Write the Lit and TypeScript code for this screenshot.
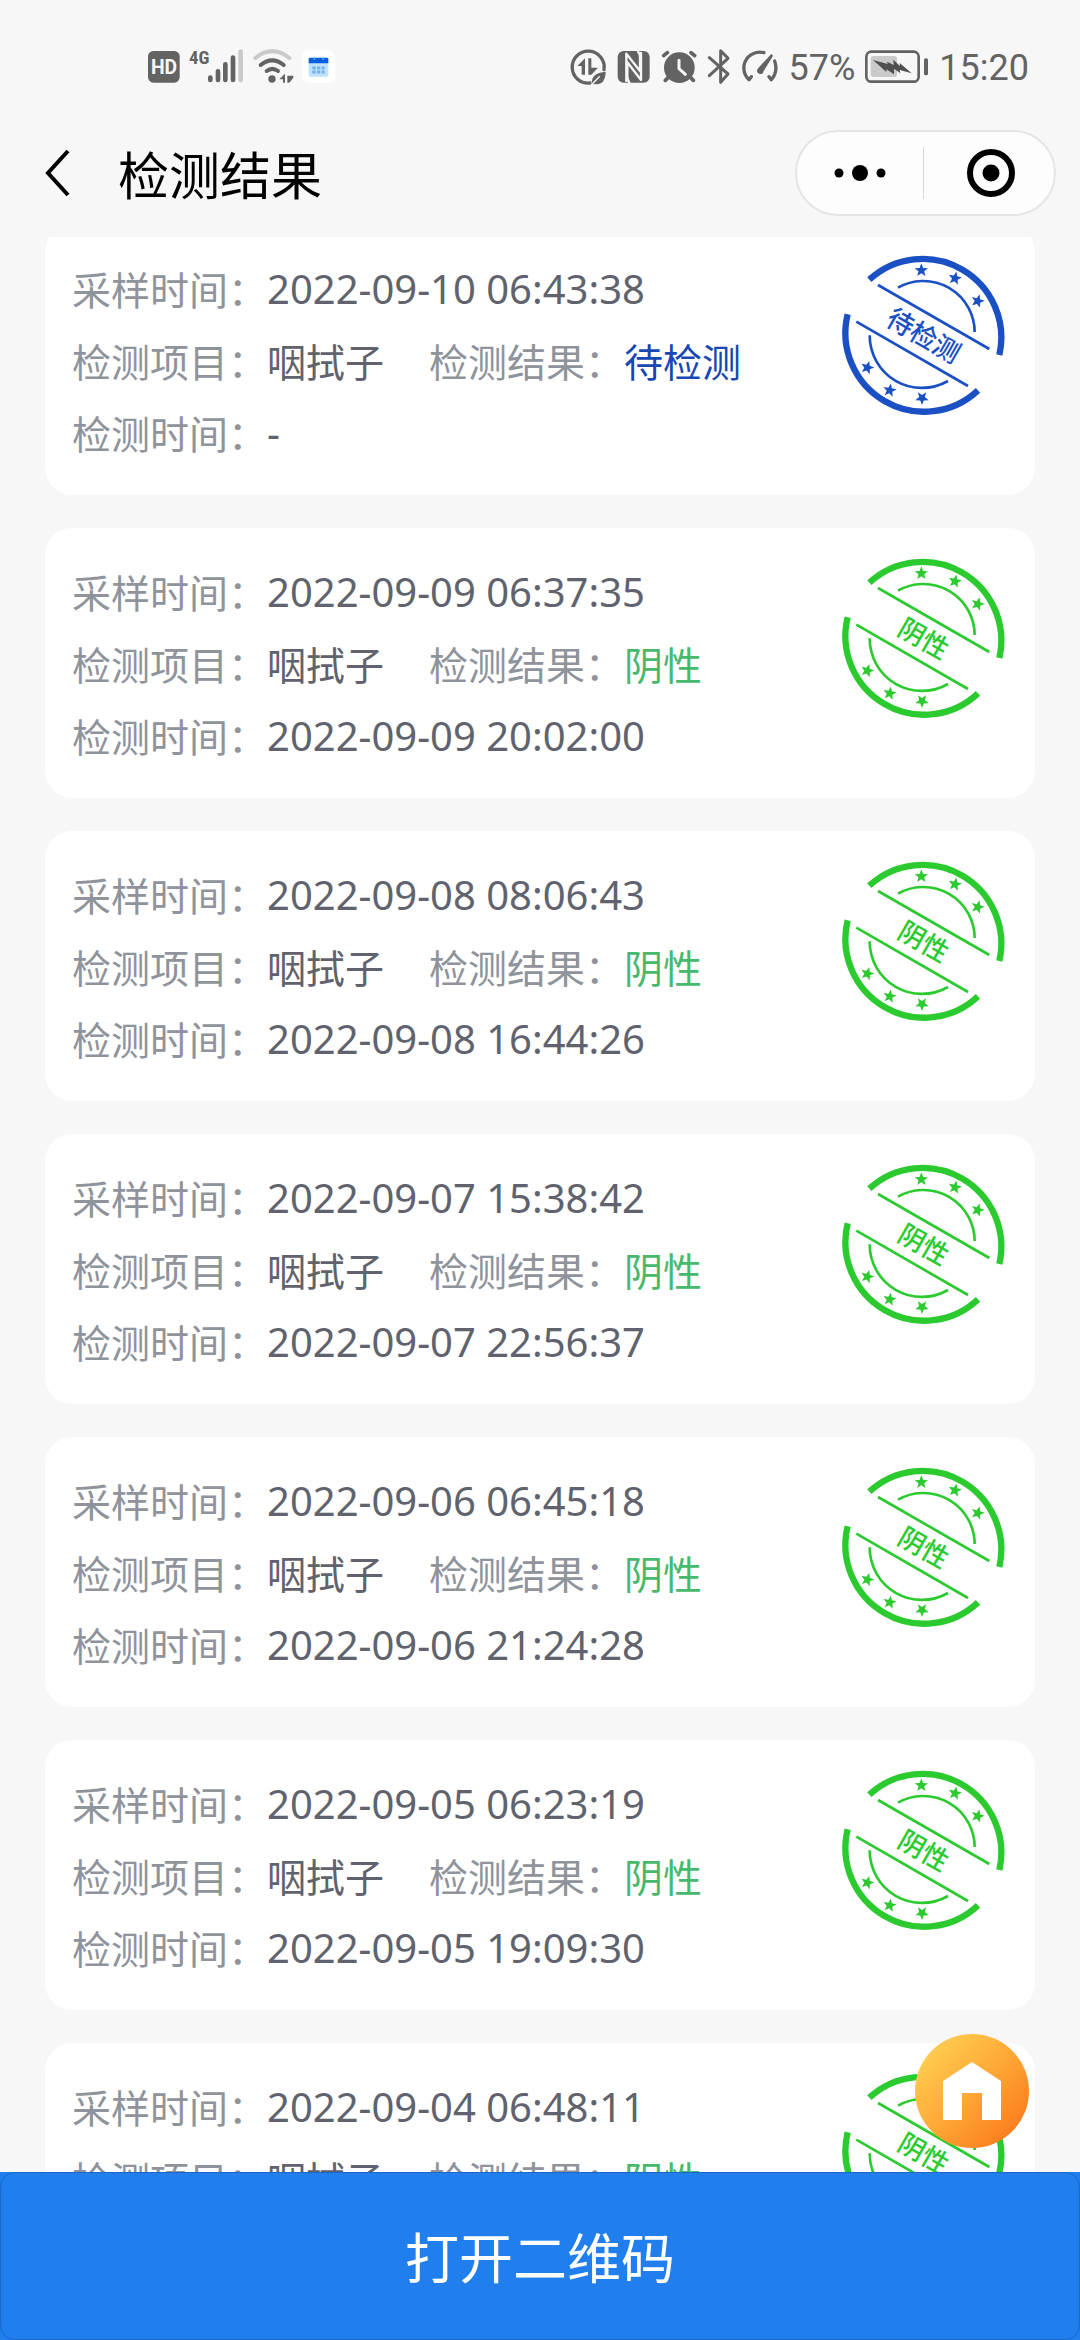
import { LitElement, html, svg, css, nothing } from "lit";
import { customElement, property } from "lit/decorators.js";

type Status = "pending" | "negative";

interface TestRecord {
  sampledAt: string;
  item: string;
  status: Status;
  checkedAt?: string;
}

const STATUS_TEXT: Record<Status, string> = {
  pending: "待检测",
  negative: "阴性",
};

const RECORDS: TestRecord[] = [
  { sampledAt: "2022-09-10 06:43:38", item: "咽拭子", status: "pending", checkedAt: "-" },
  { sampledAt: "2022-09-09 06:37:35", item: "咽拭子", status: "negative", checkedAt: "2022-09-09 20:02:00" },
  { sampledAt: "2022-09-08 08:06:43", item: "咽拭子", status: "negative", checkedAt: "2022-09-08 16:44:26" },
  { sampledAt: "2022-09-07 15:38:42", item: "咽拭子", status: "negative", checkedAt: "2022-09-07 22:56:37" },
  { sampledAt: "2022-09-06 06:45:18", item: "咽拭子", status: "negative", checkedAt: "2022-09-06 21:24:28" },
  { sampledAt: "2022-09-05 06:23:19", item: "咽拭子", status: "negative", checkedAt: "2022-09-05 19:09:30" },
  { sampledAt: "2022-09-04 06:48:11", item: "咽拭子", status: "negative" },
];

/** Five-pointed star centred on the origin. */
const starPoints = Array.from({ length: 10 }, (_, i) => {
  const r = i % 2 ? 9 : 21;
  const a = (Math.PI / 5) * i - Math.PI / 2;
  return `${(r * Math.cos(a)).toFixed(1)},${(r * Math.sin(a)).toFixed(1)}`;
}).join(" ");

const STARS = [
  [305, 103, 0],
  [406, 127, 12],
  [474, 195, 16],
  [143, 395, 16],
  [210, 463, 10],
  [307, 486, 36],
];

@customElement("result-stamp")
class ResultStamp extends LitElement {
  @property() status: Status = "negative";

  static styles = css`
    :host {
      display: block;
      flex: none;
    }
    .stamp {
      display: block;
      width: 180px;
      height: 180px;
      fill: none;
      stroke: currentColor;
    }
    .pending {
      color: #1a50c4;
    }
    .negative {
      color: #2bcb2f;
    }
    .solid {
      fill: currentColor;
      stroke: none;
    }
    .word {
      font: 500 80px "Noto Sans CJK SC", sans-serif;
      text-anchor: middle;
    }
  `;

  render() {
    return html`
      <svg class="stamp ${this.status}" viewBox="40 30 540 540" aria-hidden="true">
        <g stroke-width="19">
          <path d="M149 131A236 236 0 0 1 539 357" />
          <path d="M84 235A236 236 0 0 0 475 463" />
        </g>
        <g stroke-width="8">
          <path d="M235 155A154 154 0 0 1 465 288" />
          <path d="M150 298A157 157 0 0 0 385 435" />
          <path d="M175 147L509 339M110 257L445 450" />
        </g>
        <g class="solid">
          ${STARS.map(
            ([x, y, r]) => svg`<polygon points=${starPoints} transform="translate(${x} ${y}) rotate(${r})" />`
          )}
          <text class="word" transform="translate(312 299) rotate(30)" y="29">${STATUS_TEXT[this.status]}</text>
        </g>
      </svg>
    `;
  }
}

@customElement("result-card")
class ResultCard extends LitElement {
  @property({ attribute: false }) record!: TestRecord;

  static styles = css`
    :host {
      display: block;
    }
    .card {
      display: flex;
      align-items: flex-start;
      justify-content: space-between;
      padding: 0 22px 0 27px;
      border-radius: 27px;
      background: #fff;
    }
    .info {
      margin: 0;
      padding: 28px 0 26px;
      font: 39px/70px "Noto Sans CJK SC", sans-serif;
    }
    .row {
      display: flex;
      height: 72px;
      white-space: nowrap;
    }
    .label {
      color: #8f939b;
    }
    .value {
      margin: 0;
      color: #60636d;
    }
    .time {
      font-family: "Noto Sans", "Noto Sans CJK SC", sans-serif;
      font-size: 40px;
      line-height: 72px;
    }
    .next {
      margin-left: 45px;
    }
    .pending {
      color: #1747b4;
    }
    .negative {
      color: #47b96d;
    }
    .seal {
      margin-top: 21px;
    }
  `;

  render() {
    const r = this.record;
    return html`
      <article class="card">
        <dl class="info">
          <div class="row">
            <dt class="label">采样时间：</dt>
            <dd class="value time">${r.sampledAt}</dd>
          </div>
          <div class="row">
            <dt class="label">检测项目：</dt>
            <dd class="value">${r.item}</dd>
            <dt class="label next">检测结果：</dt>
            <dd class="value ${r.status}">${STATUS_TEXT[r.status]}</dd>
          </div>
          ${r.checkedAt
            ? html`<div class="row">
                <dt class="label">检测时间：</dt>
                <dd class="value time">${r.checkedAt}</dd>
              </div>`
            : nothing}
        </dl>
        <result-stamp class="seal" .status=${r.status}></result-stamp>
      </article>
    `;
  }
}

@customElement("status-bar")
class StatusBar extends LitElement {
  static styles = css`
    :host {
      display: block;
    }
    .bar {
      display: flex;
      justify-content: space-between;
      height: 110px;
      box-sizing: border-box;
      padding: 47px 51px 0 147px;
      color: #636363;
    }
    .group {
      display: flex;
      gap: 8px;
      height: 40px;
    }
    .right {
      gap: 10px;
    }
    svg {
      display: block;
      height: 40px;
      flex: none;
      fill: currentColor;
    }
    .line {
      fill: none;
      stroke: currentColor;
      stroke-linecap: round;
      stroke-linejoin: round;
    }
    .faint {
      opacity: 0.3;
    }
    .cut {
      fill: none;
      stroke: #f7f7f7;
      stroke-linejoin: round;
      stroke-linecap: round;
    }
    .hd {
      font: 700 58px Roboto, sans-serif;
      fill: #f7f7f7;
      text-anchor: middle;
    }
    .net {
      font: 700 56px "Roboto Condensed", "Liberation Sans Narrow", Roboto, sans-serif;
    }
    .text {
      font: 36px/42px Roboto, sans-serif;
    }
  `;

  render() {
    return html`
      <div class="bar">
        <div class="group">
          <svg width="34" viewBox="50 50 102 120" aria-hidden="true">
            <rect x="53" y="62" width="95" height="95" rx="16" />
            <text class="hd" x="101" y="131">HD</text>
          </svg>
          <svg width="55" viewBox="180 50 165 120" aria-hidden="true">
            <text class="net" x="180" y="101">4G</text>
            <g class="line" stroke-width="14">
              <path d="M244 142V149M267 123V149M289 102V149M312 82V149" />
              <path class="faint" d="M335 64V149" />
            </g>
          </svg>
          <svg width="42" viewBox="370 50 126 120" aria-hidden="true">
            <g class="line" stroke-width="12">
              <path class="faint" d="M380 83Q431 42 482 83" />
              <path d="M396 104Q431 76 465 104" />
              <path d="M414 122Q431 109 448 122" />
            </g>
            <circle cx="430" cy="146" r="11" />
            <path d="M452 147L469 130V157H463V147ZM476 157V136H494V142L482 157Z" />
          </svg>
          <svg width="34" viewBox="519 50 102 120" aria-hidden="true">
            <rect x="519" y="60" width="100" height="98" rx="20" fill="#fff" />
            <rect x="539" y="82" width="59" height="57" rx="5" fill="#bfe3ff" />
            <path d="M539 99V86Q539 82 543 82H594Q598 82 598 86V99Z" fill="#0a5fe0" />
            <path d="M556 79V88M582 79V88" stroke="#7fb2ef" stroke-width="4" />
            <path d="M550 113H587M550 125H587" stroke="#74b0ec" stroke-width="9" stroke-dasharray="10 4" />
          </svg>
        </div>
        <div class="group right">
          <svg width="38" viewBox="55 50 114 120" aria-hidden="true">
            <path class="line" stroke-width="10" stroke-linecap="butt" d="M160 118A48 48 0 1 0 118 158" />
            <path d="M80 107L103 84V133H93V107ZM113 84H122V112H142L122 133H113Z" />
            <path d="M124 160Q120 128 165 124Q164 166 130 161Z" />
            <path class="cut" stroke-width="4" d="M124 162L146 139" />
          </svg>
          <svg width="34" viewBox="199 50 102 120" aria-hidden="true">
            <rect x="201" y="62" width="96" height="95" rx="18" />
            <path class="cut" stroke-width="7" d="M227 152V70L268 122V80Q268 70 262 64M271 68V149L230 96V138Q230 150 236 156" />
          </svg>
          <svg width="36" viewBox="331 50 108 120" aria-hidden="true">
            <circle cx="386" cy="112" r="46" />
            <path class="line" stroke-width="11" d="M339 76L350 67M432 76L421 67M352 142L344 150M420 142L428 150" />
            <path class="cut" stroke-width="9" d="M385 90V115L404 132" />
          </svg>
          <svg width="24" viewBox="471 50 72 120" aria-hidden="true">
            <path class="line" stroke-width="9" d="M478 82L534 131L512 156V61L534 84L478 136" />
          </svg>
          <svg width="38" viewBox="576 50 114 120" aria-hidden="true">
            <path class="line" stroke-width="10" d="M607 139L600 148Q582 132 585 105A49 49 0 0 1 645 67" />
            <path class="line" stroke-width="10" d="M677 92Q688 124 667 148L660 139" />
            <path d="M667 71Q674 74 670 80L644 122Q642 133 632 131Q620 126 626 115Z" />
          </svg>
          <span class="text">57%</span>
          <svg width="64" viewBox="249 50 192 120" aria-hidden="true">
            <rect class="line" stroke-width="8" x="253" y="64" width="157" height="90" rx="15" />
            <rect class="faint" x="266" y="77" width="79" height="63" rx="8" />
            <rect x="426" y="84" width="12" height="51" rx="5" />
            <path d="M273 89L317 101L315 94L335 104L334 88L354 107L353 98L389 129L353 119L355 129L336 115L336 132L313 117L313 125Z" fill="#505050" />
          </svg>
          <time class="text">15:20</time>
        </div>
      </div>
    `;
  }
}

@customElement("app-root")
class AppRoot extends LitElement {
  static styles = css`
    :host {
      position: relative;
      display: flex;
      flex-direction: column;
      height: 100vh;
      overflow: hidden;
      background: #f7f7f7;
      font-family: "Noto Sans CJK SC", sans-serif;
    }
    button {
      padding: 0;
      border: 0;
      background: none;
      font: inherit;
      color: inherit;
    }
    svg {
      display: block;
    }
    .nav {
      display: flex;
      align-items: center;
      flex: none;
      height: 127px;
      box-sizing: border-box;
      padding: 0 24px 2px 41px;
      color: #000;
    }
    .back {
      width: 36px;
      height: 60px;
    }
    .title {
      flex: 1;
      margin: 0 0 0 41px;
      font-size: 51px;
      line-height: 72px;
      font-weight: 400;
    }
    .capsule {
      display: flex;
      align-items: center;
      box-sizing: border-box;
      width: 261px;
      height: 86px;
      border: 2px solid #e5e5e5;
      border-radius: 43px;
      background: #fdfdfd;
    }
    .capsule button {
      display: flex;
      flex: 1;
      align-items: center;
      justify-content: center;
      height: 100%;
    }
    .capsule .close {
      padding-left: 4px;
    }
    .divider {
      width: 1px;
      height: 52px;
      background: #d8d8d8;
    }
    .list {
      flex: 1;
      min-height: 0;
      overflow: hidden;
      padding: 0 45px;
    }
    .scrolled {
      display: grid;
      gap: 33px;
      margin-top: -12px;
    }
    .open {
      flex: none;
      height: 168px;
      box-sizing: border-box;
      border-radius: 15px;
      border: 1px solid #1a68c4;
      background: #207fed;
      color: #fff;
      font-size: 54px;
      line-height: 72px;
    }
    .footer {
      display: grid;
      flex: none;
      background: #207fed;
    }
    .home {
      position: absolute;
      right: 51px;
      bottom: 192px;
      display: grid;
      place-items: center;
      width: 114px;
      height: 114px;
      border-radius: 50%;
      background: linear-gradient(135deg, #ffcf52 10%, #ffa836 50%, #fb7a1c 90%);
    }
  `;

  render() {
    return html`
      <status-bar></status-bar>
      <header class="nav">
        <button class="back" aria-label="返回">
          <svg width="36" height="60" viewBox="0 0 36 60" fill="none" stroke="#000" stroke-width="4">
            <path d="M27 8L7 30L27 52" />
          </svg>
        </button>
        <h1 class="title">检测结果</h1>
        <div class="capsule">
          <button aria-label="更多">
            <svg width="52" height="18" viewBox="0 0 52 18">
              <circle cx="5" cy="9" r="4.5" />
              <circle cx="26" cy="9" r="8" />
              <circle cx="47" cy="9" r="4.5" />
            </svg>
          </button>
          <span class="divider"></span>
          <button class="close" aria-label="关闭">
            <svg width="48" height="48" viewBox="0 0 48 48">
              <circle cx="24" cy="24" r="21" fill="none" stroke="#000" stroke-width="6" />
              <circle cx="24" cy="24" r="8.5" />
            </svg>
          </button>
        </div>
      </header>
      <main class="list">
        <div class="scrolled">
          ${RECORDS.map((r) => html`<result-card .record=${r}></result-card>`)}
        </div>
      </main>
      <footer class="footer">
        <button class="open">打开二维码</button>
      </footer>
      <button class="home" aria-label="首页">
        <svg width="58" height="58" viewBox="0 0 58 58">
          <path d="M29 0L58 19V58H39V31H19V58H0V19Z" fill="#fff" />
        </svg>
      </button>
    `;
  }
}
